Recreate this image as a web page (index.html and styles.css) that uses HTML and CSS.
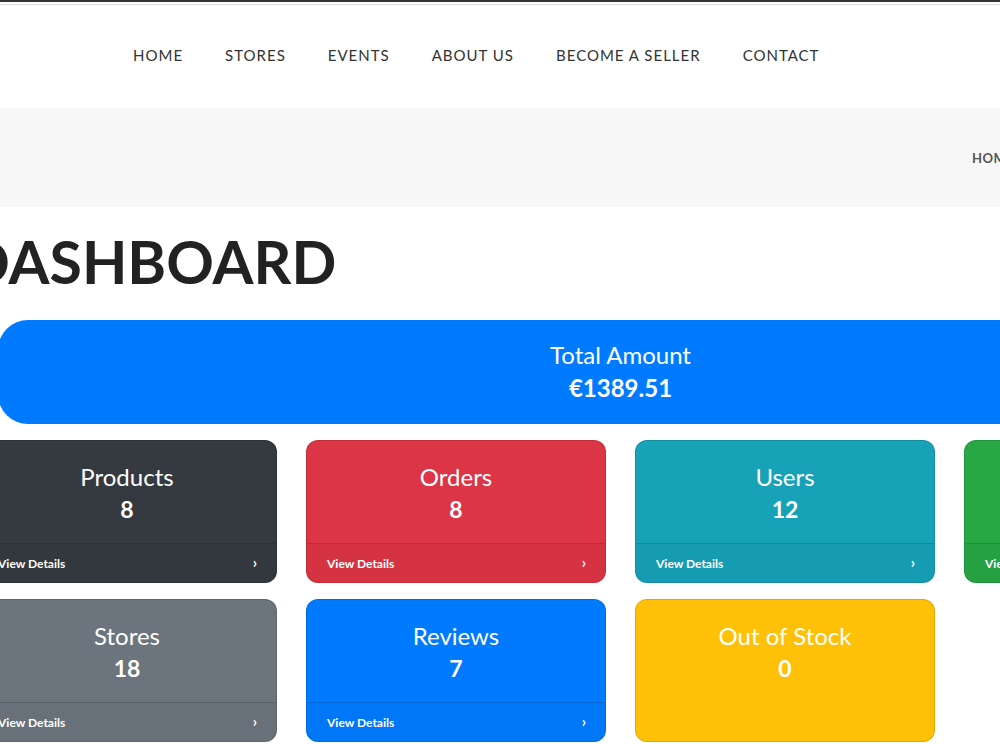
FILE: index.html
```html
<!DOCTYPE html>
<html lang="en">
<head>
<meta charset="utf-8">
<title>Dashboard</title>
<link rel="stylesheet" href="styles.css">
</head>
<body>
<div class="topline"></div>
<header class="header">
  <nav class="nav">
    <a href="#">HOME</a>
    <a href="#">STORES</a>
    <a href="#">EVENTS</a>
    <a href="#">ABOUT US</a>
    <a href="#">BECOME A SELLER</a>
    <a href="#">CONTACT</a>
  </nav>
</header>
<div class="band">
  <div class="crumbs">HOME / DASHBOARD</div>
</div>
<main class="main">
  <h1 class="title">DASHBOARD</h1>
  <div class="total">
    <div class="total-label">Total Amount</div>
    <div class="total-value">€1389.51</div>
  </div>
  <div class="grid">
    <div class="card dark">
      <div class="card-body"><div class="card-title">Products</div><div class="card-num">8</div></div>
      <div class="card-foot"><span>View Details</span><span class="chev">&#8250;</span></div>
    </div>
    <div class="card red">
      <div class="card-body"><div class="card-title">Orders</div><div class="card-num">8</div></div>
      <div class="card-foot"><span>View Details</span><span class="chev">&#8250;</span></div>
    </div>
    <div class="card teal">
      <div class="card-body"><div class="card-title">Users</div><div class="card-num">12</div></div>
      <div class="card-foot"><span>View Details</span><span class="chev">&#8250;</span></div>
    </div>
    <div class="card green">
      <div class="card-body"><div class="card-title">Categories</div><div class="card-num">5</div></div>
      <div class="card-foot"><span>View Details</span><span class="chev">&#8250;</span></div>
    </div>
    <div class="card gray">
      <div class="card-body"><div class="card-title">Stores</div><div class="card-num">18</div></div>
      <div class="card-foot"><span>View Details</span><span class="chev">&#8250;</span></div>
    </div>
    <div class="card blue">
      <div class="card-body"><div class="card-title">Reviews</div><div class="card-num">7</div></div>
      <div class="card-foot"><span>View Details</span><span class="chev">&#8250;</span></div>
    </div>
    <div class="card yellow">
      <div class="card-body"><div class="card-title">Out of Stock</div><div class="card-num">0</div></div>
    </div>
  </div>
</main>
</body>
</html>
```

FILE: styles.css
```css
html, body {
  margin: 0;
  padding: 0;
  overflow: hidden;
  background: #fff;
  font-family: Lato, "Open Sans", Arial, sans-serif;
  color: #222;
}
.topline {
  height: 2px;
  background: #333;
  border-bottom: 2px solid #fff;
  box-shadow: 0 3px 0 0 #dedede;
  margin-bottom: 1px;
}
.header {
  padding: 40px 0 43px;
  background: #fff;
}
.nav {
  display: flex;
  gap: 42px;
  padding-left: 133px;
}
.nav a {
  font-size: 15px;
  line-height: 20px;
  letter-spacing: 1px;
  color: #333;
  text-decoration: none;
  white-space: nowrap;
}
.band {
  height: 99px;
  background: #f7f7f7;
  overflow: hidden;
  display: flex;
  align-items: center;
}
.crumbs {
  padding-left: 972px;
  padding-top: 1px;
  font-size: 13px;
  font-weight: 700;
  letter-spacing: 0.5px;
  color: #555;
  white-space: nowrap;
}
.main {
  width: 1287px;
  margin-left: -23px;
}
.title {
  margin: 19px 0 22px -12px;
  font-size: 59px;
  line-height: 72px;
  font-weight: 700;
  color: #222;
}
.total {
  margin: 0 21px 16px;
  height: 104px;
  box-sizing: border-box;
  padding-top: 18px;
  background: #007bff;
  border-radius: 30px;
  color: #fff;
  text-align: center;
}
.total-label {
  font-size: 24px;
  line-height: 33px;
}
.total-value {
  font-size: 24px;
  line-height: 34px;
  font-weight: 700;
}
.grid {
  display: grid;
  grid-template-columns: repeat(4, 300px);
  column-gap: 29px;
  row-gap: 16px;
}
.card {
  display: flex;
  flex-direction: column;
  border: 1px solid rgba(0,0,0,0.125);
  border-radius: 12px;
  overflow: hidden;
  color: #fff;
  height: 143px;
  box-sizing: border-box;
}
.card-body {
  flex: 1;
  padding: 19px 20px 0;
  text-align: center;
}
.card-title {
  font-size: 24px;
  line-height: 33px;
}
.card-num {
  font-size: 23px;
  line-height: 32px;
  font-weight: 700;
}
.card-foot {
  display: flex;
  justify-content: space-between;
  align-items: center;
  height: 39px;
  box-sizing: border-box;
  padding: 0 19px 0 20px;
  background: rgba(0,0,0,0.03);
  border-top: 1px solid rgba(0,0,0,0.125);
  font-size: 12px;
  font-weight: 700;
}
.chev {
  font-size: 15px;
  line-height: 16px;
  margin-top: -2px;
}
.dark { background: #343a40; }
.red { background: #dc3545; }
.teal { background: #17a2b8; }
.green { background: #28a745; }
.gray { background: #6c757d; }
.blue { background: #007bff; }
.yellow { background: #ffc107; }
```
